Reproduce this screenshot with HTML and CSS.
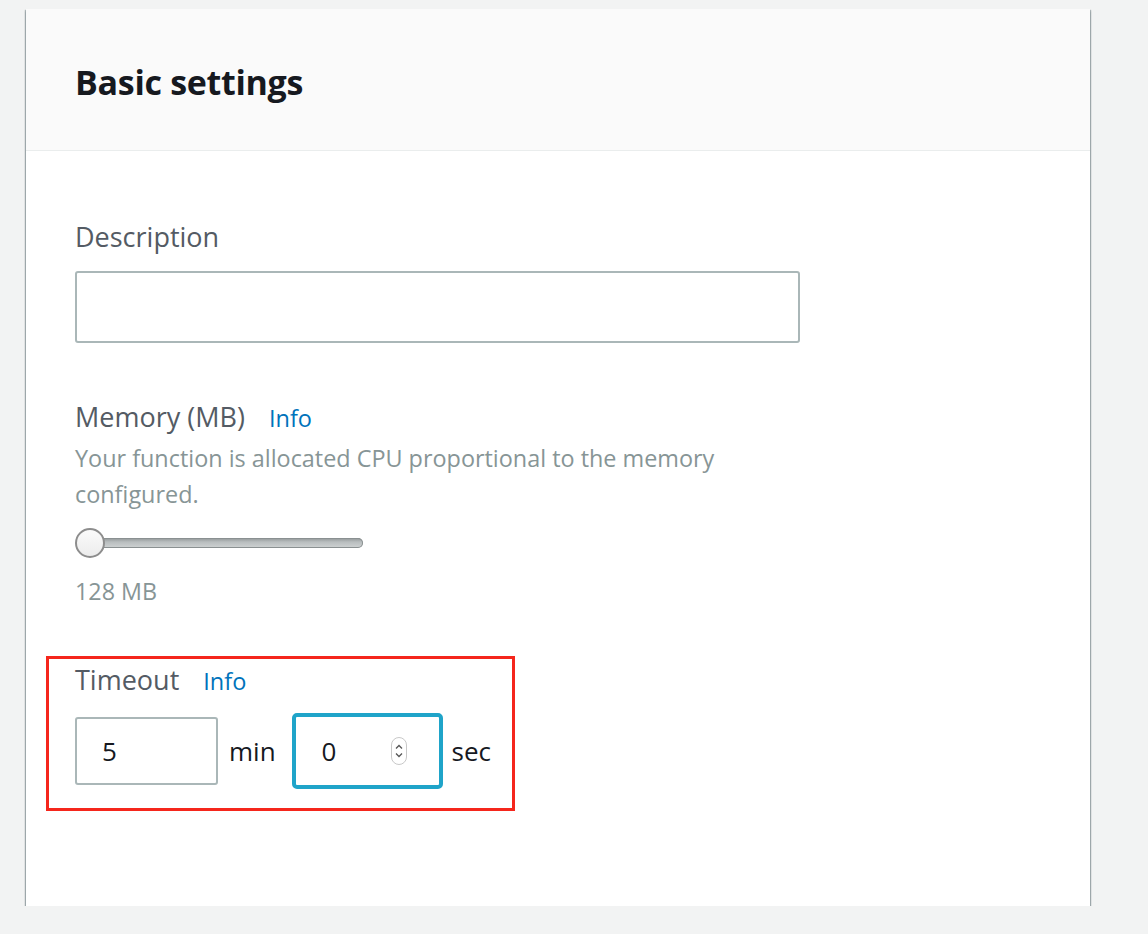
FILE: index.html
```html
<!DOCTYPE html>
<html>
<head>
<meta charset="utf-8">
<link rel="stylesheet" href="styles.css">
</head>
<body>
<div class="card">
  <div class="card-header">
    <h2 class="title">Basic settings</h2>
  </div>
  <div class="card-body">
    <div class="field field-desc">
      <div class="label">Description</div>
      <div class="text-input wide"></div>
    </div>
    <div class="field field-mem">
      <div class="label">Memory (MB) <span class="info">Info</span></div>
      <div class="hint">Your function is allocated CPU proportional to the memory<br>configured.</div>
      <div class="slider">
        <div class="track"></div>
        <div class="thumb"></div>
      </div>
      <div class="value">128 MB</div>
    </div>
    <div class="timeout-box">
      <div class="label">Timeout <span class="info">Info</span></div>
      <div class="timeout-row">
        <div class="text-input small"><span class="num">5</span></div>
        <span class="unit unit-min">min</span>
        <div class="text-input focused"><span class="num">0</span>
          <span class="spinner">
            <svg width="16" height="28" viewBox="0 0 16 28"><rect x="0.5" y="0.5" width="15" height="27" rx="7.5" fill="#fff" stroke="#c8c8c8"/><path d="M5 11.5 L8 8.5 L11 11.5" fill="none" stroke="#555" stroke-width="1.3"/><path d="M5 16.5 L8 19.5 L11 16.5" fill="none" stroke="#555" stroke-width="1.3"/></svg>
          </span>
        </div>
        <span class="unit unit-sec">sec</span>
      </div>
    </div>
  </div>
</div>
</body>
</html>
```
FILE: styles.css
```css
html, body {
  margin: 0;
  padding: 0;
  background: #f2f3f3;
}
body {
  font-family: "Open Sans", "Noto Sans", sans-serif;
  color: #545b64;
  padding: 9px 0 0 26px;
}
.card {
  width: 1064px;
  height: 897px;
  background: #fff;
  box-shadow: 0 2px 2px 0 rgba(0,28,36,0.4), 1px 1px 1px 0 rgba(0,28,36,0.25), -1px 1px 1px 0 rgba(0,28,36,0.25);
  box-sizing: border-box;
}
.card-header {
  height: 142px;
  background: #fafafa;
  border-bottom: 1px solid #eaeded;
  box-sizing: border-box;
  display: flex;
  align-items: center;
  padding-left: 49px;
  padding-top: 4px;
}
.title {
  margin: 0;
  font-size: 34px;
  font-weight: 700;
  color: #16191f;
  letter-spacing: -0.3px;
}
.card-body {
  padding: 70px 0 0 49px;
}
.label {
  font-size: 27px;
  line-height: 32px;
  color: #545b64;
}
.info {
  color: #0073bb;
  font-size: 23.5px;
  margin-left: 17px;
}
.field-desc .text-input {
  margin-top: 18px;
}
.text-input {
  border: 2px solid #aab7b8;
  border-radius: 3px;
  box-sizing: border-box;
  background: #fff;
  display: flex;
  align-items: center;
}
.text-input.wide {
  width: 725px;
  height: 72px;
}
.field-mem {
  margin-top: 58px;
}
.hint {
  font-size: 23.4px;
  line-height: 36px;
  color: #879596;
  margin-top: 6px;
}
.slider {
  position: relative;
  width: 290px;
  height: 30px;
  margin-top: 16px;
}
.track {
  position: absolute;
  left: 14px;
  top: 10px;
  width: 274px;
  height: 10px;
  border-radius: 5px;
  background: linear-gradient(#8f9596, #b9bebf 40%, #cfd3d3);
  box-shadow: inset 0 0 0 1px #8a9091;
}
.thumb {
  position: absolute;
  left: 0;
  top: 0;
  width: 30px;
  height: 30px;
  box-sizing: border-box;
  border-radius: 50%;
  border: 2px solid #8d8d8d;
  background: linear-gradient(#fbfbfb, #ececec);
}
.value {
  font-size: 23.3px;
  line-height: 32px;
  color: #879596;
  margin-top: 17px;
}
.timeout-box {
  margin-top: 49px;
  margin-left: -29px;
  width: 469px;
  height: 155px;
  box-sizing: border-box;
  border: 3px solid #f5261c;
  padding: 5px 0 0 26px;
}
.timeout-row {
  display: flex;
  align-items: center;
  margin-top: 16px;
}
.text-input.small {
  width: 143px;
  height: 68px;
  padding-left: 25px;
}
.text-input.focused {
  width: 151px;
  height: 76px;
  border: 4px solid #1fa4c9;
  border-radius: 5px;
  padding-left: 26px;
}
.num {
  font-size: 26px;
  color: #16191f;
}
.unit {
  font-size: 26px;
  color: #16191f;
}
.unit-min {
  margin: 0 16px 0 11px;
}
.unit-sec {
  margin-left: 9px;
}
.spinner {
  margin-left: auto;
  margin-right: 32px;
  display: flex;
}
```
